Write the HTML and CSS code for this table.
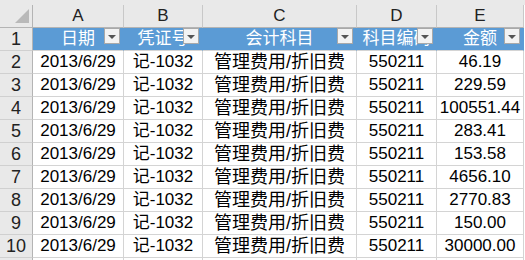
FILE: index.html
```html
<!DOCTYPE html>
<html lang="zh-CN">
<head>
<meta charset="utf-8">
<title>Sheet</title>
<link rel="stylesheet" href="styles.css">
</head>
<body>
<div class="sheet">
  <div class="topband"></div>
  <div class="grid">
    <div class="corner"><svg class="corner-tri" width="14" height="14" viewBox="0 0 14 14"><polygon points="0,14 14,14 14,0" fill="#b9b9b9"/></svg></div>
    <div class="colhdr">A</div>
    <div class="colhdr">B</div>
    <div class="colhdr">C</div>
    <div class="colhdr">D</div>
    <div class="colhdr">E</div>

    <div class="rowhdr">1</div>
    <div class="th">日期<span class="filter"><span class="arrow"></span></span></div>
    <div class="th">凭证号<span class="filter"><span class="arrow"></span></span></div>
    <div class="th">会计科目<span class="filter"><span class="arrow"></span></span></div>
    <div class="th">科目编码<span class="filter"><span class="arrow"></span></span></div>
    <div class="th">金额<span class="filter"><span class="arrow"></span></span></div>

    <div class="rowhdr">2</div><div class="td">2013/6/29</div><div class="td">记-1032</div><div class="td cjk">管理费用/折旧费</div><div class="td">550211</div><div class="td">46.19</div>
    <div class="rowhdr">3</div><div class="td">2013/6/29</div><div class="td">记-1032</div><div class="td cjk">管理费用/折旧费</div><div class="td">550211</div><div class="td">229.59</div>
    <div class="rowhdr">4</div><div class="td">2013/6/29</div><div class="td">记-1032</div><div class="td cjk">管理费用/折旧费</div><div class="td">550211</div><div class="td">100551.44</div>
    <div class="rowhdr">5</div><div class="td">2013/6/29</div><div class="td">记-1032</div><div class="td cjk">管理费用/折旧费</div><div class="td">550211</div><div class="td">283.41</div>
    <div class="rowhdr">6</div><div class="td">2013/6/29</div><div class="td">记-1032</div><div class="td cjk">管理费用/折旧费</div><div class="td">550211</div><div class="td">153.58</div>
    <div class="rowhdr">7</div><div class="td">2013/6/29</div><div class="td">记-1032</div><div class="td cjk">管理费用/折旧费</div><div class="td">550211</div><div class="td">4656.10</div>
    <div class="rowhdr">8</div><div class="td">2013/6/29</div><div class="td">记-1032</div><div class="td cjk">管理费用/折旧费</div><div class="td">550211</div><div class="td">2770.83</div>
    <div class="rowhdr">9</div><div class="td">2013/6/29</div><div class="td">记-1032</div><div class="td cjk">管理费用/折旧费</div><div class="td">550211</div><div class="td">150.00</div>
    <div class="rowhdr">10</div><div class="td">2013/6/29</div><div class="td">记-1032</div><div class="td cjk">管理费用/折旧费</div><div class="td">550211</div><div class="td">30000.00</div>
    <div class="rowhdr"></div><div class="td"></div><div class="td"></div><div class="td"></div><div class="td"></div><div class="td"></div>
  </div>
</div>
</body>
</html>
```

FILE: styles.css
```css
html, body {
  margin: 0;
  padding: 0;
  background: #ffffff;
}
.sheet {
  width: 525px;
  height: 260px;
  overflow: hidden;
  font-family: "Liberation Sans", "Noto Sans CJK SC", sans-serif;
  color: #000;
}
.topband {
  height: 5px;
  background: #e9e9e9;
}
.grid {
  display: grid;
  grid-template-columns: 33px 91px 79px 154px 80px 87px;
  grid-auto-rows: 23px;
}
.grid > div {
  box-sizing: border-box;
  border-right: 1px solid #d4d4d4;
  border-bottom: 1px solid #d4d4d4;
  text-align: center;
  line-height: 22px;
  white-space: nowrap;
  overflow: hidden;
  position: relative;
}
.grid > .corner {
  background: #e9e9e9;
  border-right-color: #b4b4b4;
  border-bottom-color: #b4b4b4;
  display: flex;
  justify-content: flex-end;
  align-items: flex-end;
  padding: 0 3px 4px 0;
}
.corner-tri {
  display: block;
}
.grid > .colhdr {
  background: #e9e9e9;
  border-right-color: #c8c8c8;
  border-bottom-color: #b4b4b4;
  font-size: 17px;
  color: #222;
}
.grid > .rowhdr {
  background: #e9e9e9;
  border-right-color: #b4b4b4;
  border-bottom-color: #d0d0d0;
  font-size: 18px;
  color: #222;
}
.grid > .th {
  background: #5b9bd5;
  border-right-color: #5b9bd5;
  color: #ffffff;
  font-size: 17px;
}
.filter {
  position: absolute;
  top: 0;
  right: 3px;
  width: 16px;
  height: 16px;
  box-sizing: border-box;
  border: 1px solid #a9a9a9;
  background: #f3f3f3;
  display: flex;
  align-items: center;
  justify-content: center;
}
.arrow {
  width: 0;
  height: 0;
  border-left: 4px solid transparent;
  border-right: 4px solid transparent;
  border-top: 4px solid #555555;
  margin-top: 1px;
}
.grid > .td {
  font-size: 17px;
}
.grid > .td.cjk {
  font-size: 18px;
}
```
